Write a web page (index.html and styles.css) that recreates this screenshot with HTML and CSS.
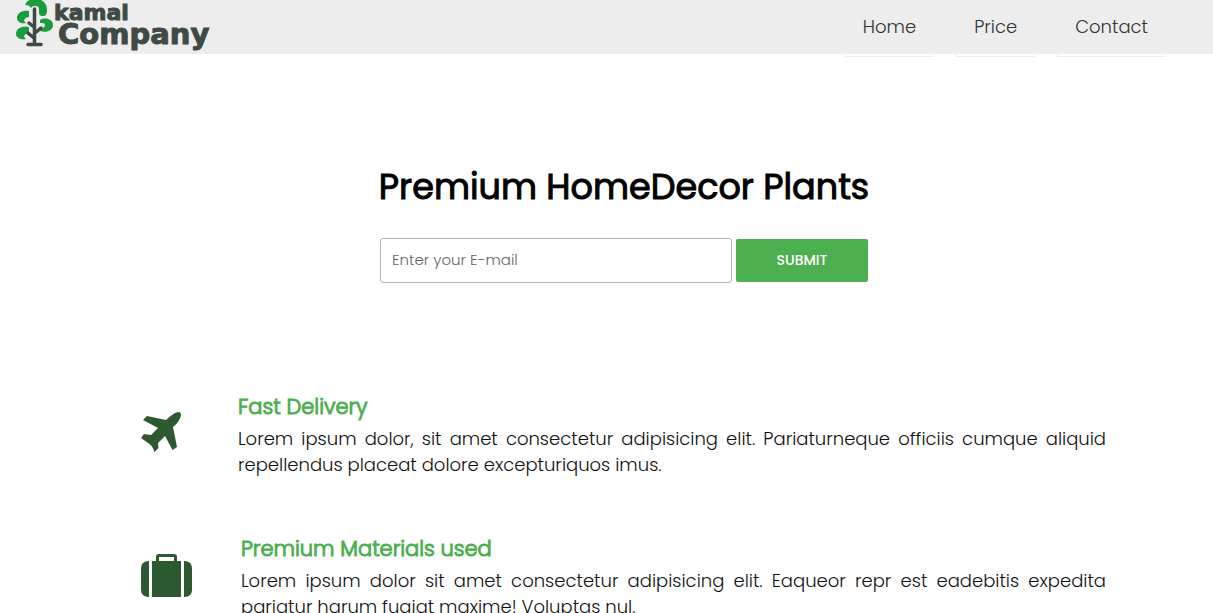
FILE: index.html
```html
<!DOCTYPE html>
<html lang="en">
<head>
<meta charset="utf-8">
<meta name="viewport" content="width=device-width, initial-scale=1">
<title>kamal Company</title>
<link rel="stylesheet" href="styles.css">
</head>
<body>
<header class="header">
  <a class="logo" href="#">
    <svg class="logo-tree" viewBox="0 0 38 47" width="38" height="47" aria-hidden="true">
      <g fill="#1a9c40">
        <path d="M9 5C11 0 15-1 20-1c7 0 11 5 11 11 0 4-1 6-4 6-3 0-4-1-4-4V9c0-2-1-3-4-3s-3 1-4 2c-1-2-3-3-6-3z"/>
        <path d="M13 11C8 10 1 12 1 18c0 4 4 6 9 5-1-1-2-2-2-3 1-2 3-3 5-3z"/>
        <path d="M13 27C7 25 0 28 0 34c0 4 5 6 10 5-1-1-2-2-2-3 1-2 3-3 5-3z"/>
        <path d="M24 20c5-3 13-1 13 5 0 6-7 8-13 6v-2c3-1 5-2 5-4s-2-2-5-2z"/>
      </g>
      <path d="M18.500 9v35M12 44.500h13M18 27l-5-4M18 38l-6-5M19 33l6-5" fill="none" stroke="#404a45" stroke-width="3.500" stroke-linecap="round"/>
    </svg>
    <span class="logo-text"><span class="logo-first">kamal</span><span class="logo-second">Company</span></span>
  </a>
  <nav class="nav">
    <a class="nav-link" href="#home">Home</a>
    <a class="nav-link" href="#price">Price</a>
    <a class="nav-link" href="#contact">Contact</a>
  </nav>
</header>
<main>
  <section class="hero" id="home">
    <h1 class="hero-title">Premium HomeDecor Plants</h1>
    <form class="signup">
      <input class="signup-email" type="email" placeholder="Enter your E-mail" aria-label="E-mail">
      <button class="signup-button" type="submit">SUBMIT</button>
    </form>
  </section>
  <section class="features">
    <article class="feature">
      <div class="feature-icon">
        <svg viewBox="0 0 40 40" width="40" height="40" aria-hidden="true"><path fill="#2c592f" d="M25 8C29 4 33 1 37 0c2 0 3 1 3 3-.5 4-4 9-8 12l4 20-4.500 3L24 24l-7 7 .5 5-4 4q-2-6-5-8T0 26l3-4 7 1 7-7L2 8l4-4z"/></svg>
      </div>
      <div class="feature-body">
        <h2 class="feature-title">Fast Delivery</h2>
        <p class="feature-text">Lorem ipsum dolor, sit amet consectetur adipisicing elit. Pariaturneque officiis cumque aliquid repellendus placeat dolore excepturiquos imus.</p>
      </div>
    </article>
    <article class="feature">
      <div class="feature-icon feature-icon-wide">
        <svg viewBox="0 0 51 43" width="51" height="43" aria-hidden="true"><path fill="#2c592f" d="M8 7v36H7q-7-1-7-7V14q0-6 7-7zM43 7v36h1q7-1 7-7V14q0-6-7-7zM11 7h4V3q0-3 3-3h15q3 0 3 3v4h4v36H11zM18 7h15V3H18z"/></svg>
      </div>
      <div class="feature-body">
        <h2 class="feature-title">Premium Materials used</h2>
        <p class="feature-text">Lorem ipsum dolor sit amet consectetur adipisicing elit. Eaqueor repr est eadebitis expedita pariatur harum fugiat maxime! Voluptas nul.</p>
      </div>
    </article>
  </section>
</main>
</body>
</html>
```

FILE: styles.css
```css
* {
  box-sizing: border-box;
}

body {
  margin: 0;
  background: #fff;
  color: #000;
  font-family: Poppins, Inter, "Liberation Sans", sans-serif;
}

h1, h2, p {
  margin: 0;
}

.header {
  display: flex;
  justify-content: space-between;
  align-items: flex-start;
  height: 54px;
  padding: 0 47px 0 16px;
  background: #ededed;
}

.logo {
  display: flex;
  color: #404a45;
  text-decoration: none;
}

.logo-text {
  display: flex;
  flex-direction: column;
  font-family: "DejaVu Sans", sans-serif;
  font-weight: 700;
  -webkit-text-stroke: 1px #404a45;
}

.logo-first {
  font-size: 22px;
  line-height: 26px;
}

.logo-second {
  padding-left: 4px;
  font-size: 29px;
  line-height: 16px;
}

.nav {
  display: flex;
  gap: 22px;
}

.nav-link {
  height: 57px;
  padding: 0 17px;
  border: 1px solid #ededed;
  color: #333;
  font-size: 18px;
  font-weight: 300;
  line-height: 52px;
  text-decoration: none;
}

.hero {
  display: flex;
  flex-direction: column;
  align-items: center;
  padding: 108px 0 0 35px;
}

.hero-title {
  font-size: 35px;
  font-weight: 400;
  line-height: 50px;
  -webkit-text-stroke: 1px currentColor;
}

.signup {
  display: flex;
  align-items: center;
  gap: 4px;
  margin-top: 26px;
}

.signup-email {
  width: 352px;
  height: 45px;
  padding: 0 11px 2px;
  border: 1px solid #b5b5b5;
  border-radius: 3px;
  font-family: inherit;
  font-size: 15px;
  font-weight: 300;
}

.signup-email::placeholder {
  color: #666;
}

.signup-button {
  width: 132px;
  height: 43px;
  border: 0;
  border-radius: 2px;
  background: #4caf50;
  color: #fff;
  font-family: inherit;
  font-size: 14px;
  font-weight: 500;
}

.features {
  display: flex;
  flex-direction: column;
  gap: 56px;
  padding: 109px 107px 60px 141px;
}

.feature {
  display: flex;
}

.feature-icon {
  flex: none;
  width: 97px;
  padding-top: 20px;
}

.feature-icon-wide {
  width: 100px;
}

.feature-body {
  flex: 1;
}

.feature-title {
  color: #4caf50;
  font-size: 21px;
  font-weight: 300;
  line-height: 30px;
  -webkit-text-stroke: 1px currentColor;
}

.feature-text {
  margin-top: 4px;
  color: #111;
  font-size: 18px;
  font-weight: 300;
  line-height: 26px;
  text-align: justify;
}
```
